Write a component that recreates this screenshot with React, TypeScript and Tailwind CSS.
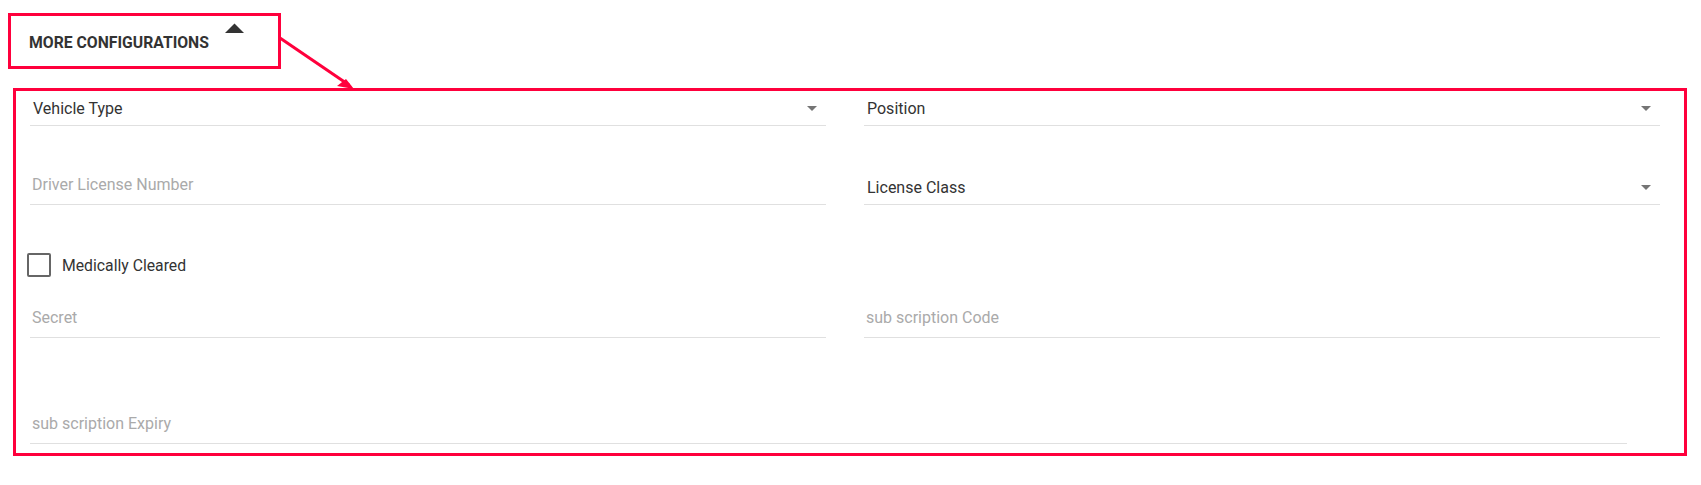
import React from 'react';

const RED = '#ff003c';

function Caret() {
  return (
    <svg width="10" height="5" viewBox="0 0 10 5" className="shrink-0">
      <path d="M0 0 L10 0 L5 5 Z" fill="#757575" />
    </svg>
  );
}

function SelectField({ label }: { label: string }) {
  return (
    <div className="flex w-full items-center justify-between border-b border-[#e0e0e0] pb-[7px] pl-[3px] pr-[9px]">
      <span className="text-[16px] leading-[19px] text-[#333]">{label}</span>
      <Caret />
    </div>
  );
}

function InputField({ placeholder, className = 'w-full' }: { placeholder: string; className?: string }) {
  return (
    <div className={`border-b border-[#e0e0e0] pb-[10px] pl-[2px] ${className}`}>
      <input
        placeholder={placeholder}
        className="block w-full bg-transparent text-[16px] leading-[19px] text-[#333] outline-none placeholder:text-[#aaa]"
      />
    </div>
  );
}

export default function App() {
  return (
    <main className="relative min-h-screen bg-white pb-[29px] pt-[13px] font-['Roboto',sans-serif]">
      <div className="ml-[8px] flex h-[56px] w-[273px] items-start border-[3px] border-[#ff003c] pl-[18px]">
        <span className="pt-[18px] text-[15.75px] font-bold leading-[18px] text-[#333]">MORE CONFIGURATIONS</span>
        <svg width="19" height="10" viewBox="0 0 19 10" className="ml-[16px] mt-[7px]">
          <path d="M0 10 L9.5 0.5 L19 10 Z" fill="#333" />
        </svg>
      </div>

      <svg className="pointer-events-none absolute left-0 top-0" width="400" height="100">
        <line x1="280" y1="38" x2="349" y2="85" stroke={RED} strokeWidth="3" />
        <path d="M354 89 L337 86 L346 79 Z" fill={RED} />
      </svg>

      <section className="ml-[13px] mt-[19px] w-[1674px] border-[3px] border-[#ff003c] pb-[9px] pl-[14px]">
        <div className="grid h-[35px] grid-cols-[796px_796px] items-end gap-x-[38px]">
          <SelectField label="Vehicle Type" />
          <SelectField label="Position" />
        </div>

        <div className="grid h-[79px] grid-cols-[796px_796px] items-end gap-x-[38px]">
          <InputField placeholder="Driver License Number" />
          <SelectField label="License Class" />
        </div>

        <label className="-ml-[3px] mt-[48px] flex h-[24px] items-center">
          <span className="block h-[24px] w-[24px] rounded-[2px] border-2 border-[#666]" />
          <span className="ml-[11px] text-[15.75px] leading-[19px] text-[#333]">Medically Cleared</span>
        </label>

        <div className="grid h-[61px] grid-cols-[796px_796px] items-end gap-x-[38px]">
          <InputField placeholder="Secret" />
          <InputField placeholder="sub scription Code" />
        </div>

        <div className="flex h-[106px] items-end">
          <InputField placeholder="sub scription Expiry" className="w-[1597px]" />
        </div>
      </section>
    </main>
  );
}
